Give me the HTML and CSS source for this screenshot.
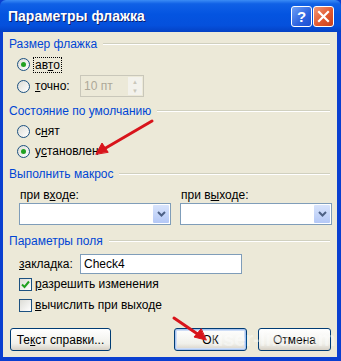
FILE: index.html
```html
<!doctype html>
<html lang="ru">
<head>
  <meta charset="UTF-8">
  <title>Параметры флажка</title>
  <link rel="stylesheet" href="styles.css">
</head>
<body>
  <div class="window">
    <div class="titlebar">
      <span class="title">Параметры флажка</span>
      <div class="title-buttons">
        <span class="tbtn help">?</span>
        <span class="tbtn close">
          <svg width="13" height="13" viewBox="0 0 13 13"><path d="M2 2 L11 11 M11 2 L2 11" stroke="#fff" stroke-width="2.2" stroke-linecap="square"/></svg>
        </span>
      </div>
    </div>

    <div class="body">
      <div class="group-title g1"><span>Размер флажка</span></div>
      <div class="row r-auto">
        <span class="radio checked"></span>
        <span class="focus">ав<u>т</u>о</span>
      </div>
      <div class="row r-exact">
        <span class="radio"></span>
        <span class="lbl"><u>т</u>очно:</span>
        <div class="spin">
          <span>10 пт</span>
          <div class="spin-btns"><span>&#9650;</span><span>&#9660;</span></div>
        </div>
      </div>

      <div class="group-title g2"><span>Состояние по умолчанию</span></div>
      <div class="row r-off">
        <span class="radio"></span>
        <span>с<u>н</u>ят</span>
      </div>
      <div class="row r-on">
        <span class="radio checked"></span>
        <span>у<u>с</u>тановлен</span>
      </div>

      <div class="group-title g3"><span>Выполнить макрос</span></div>
      <div class="macro">
        <div class="macro-col">
          <span class="small-lbl">при в<u>х</u>оде:</span>
          <div class="combo"><span class="combo-btn"><svg width="9" height="6" viewBox="0 0 9 6"><path d="M1 1 L4.5 4.5 L8 1" fill="none" stroke="#4D6185" stroke-width="2"/></svg></span></div>
        </div>
        <div class="macro-col">
          <span class="small-lbl">при в<u>ы</u>ходе:</span>
          <div class="combo"><span class="combo-btn"><svg width="9" height="6" viewBox="0 0 9 6"><path d="M1 1 L4.5 4.5 L8 1" fill="none" stroke="#4D6185" stroke-width="2"/></svg></span></div>
        </div>
      </div>

      <div class="group-title g4"><span>Параметры поля</span></div>
      <div class="row r-bookmark">
        <span class="bm-lbl"><u>з</u>акладка:</span>
        <div class="textbox">Check4</div>
      </div>
      <div class="row r-check1">
        <span class="check checked">
          <svg width="11" height="11" viewBox="0 0 11 11"><path d="M2 5.5 L4.5 8 L9 2.5" fill="none" stroke="#21A121" stroke-width="2"/></svg>
        </span>
        <span><u>р</u>азрешить изменения</span>
      </div>
      <div class="row r-check2">
        <span class="check"></span>
        <span><u>в</u>ычислить при выходе</span>
      </div>

      <div class="buttons">
        <span class="btn help-btn">Те<u>к</u>ст справки...</span>
        <div class="btn-pair">
          <span class="btn default">ОК</span>
          <span class="btn">Отмена</span>
        </div>
      </div>
    </div>

    <span class="watermark">user-life.com</span>

    <svg class="arrows" width="341" height="361" viewBox="0 0 341 361">
      <g stroke="#D8141B" stroke-width="3" stroke-linecap="round" fill="#D8141B">
        <line x1="152" y1="121" x2="104" y2="149"/>
        <polygon points="96,154 102,143 108,152" stroke-width="1"/>
        <line x1="174" y1="318" x2="199" y2="335"/>
        <polygon points="206,340 194,337 201,329" stroke-width="1"/>
      </g>
    </svg>
  </div>
</body>
</html>
```

FILE: styles.css
```css
body {
    margin: 0;
    font-family: 'Liberation Sans', Arial, sans-serif;
    font-size: 12px;
    color: #000;
    background: #fff;
}

.window {
    position: relative;
    width: 341px;
    height: 361px;
    box-sizing: border-box;
    background: #0A3FD0;
    padding: 0 4px 4px 3px;
    display: flex;
    flex-direction: column;
    overflow: hidden;
}

.titlebar {
    height: 32px;
    margin: 0 -4px 0 -3px;
    padding: 0 7px 0 8px;
    display: flex;
    align-items: center;
    justify-content: space-between;
    background: linear-gradient(to bottom, #3B8CF5 0%, #1061E6 12%, #0454E0 45%, #0550DC 80%, #0441C4 100%);
    border-radius: 6px 6px 0 0;
}

.title {
    color: #fff;
    font-weight: bold;
    font-size: 14px;
    text-shadow: 1px 1px 0 #0A1E6E;
}

.title-buttons {
    display: flex;
    gap: 1px;
    margin-top: 1px;
}

.tbtn {
    width: 19px;
    height: 19px;
    border: 1px solid #fff;
    border-radius: 3px;
    display: flex;
    align-items: center;
    justify-content: center;
    color: #fff;
    font-weight: bold;
    font-size: 15px;
}

.help {
    background: linear-gradient(135deg, #6FA0F5, #2D63E0 60%, #1C4FD2);
}

.close {
    background: linear-gradient(135deg, #F09878, #E2582F 55%, #C8401C);
}

.body {
    flex: 1;
    background: #ECE9D8;
    padding: 4px 5px 0 5px;
    display: flex;
    flex-direction: column;
}

.group-title {
    height: 16px;
    display: flex;
    align-items: center;
    gap: 6px;
    color: #0046D5;
    padding-left: 1px;
}

.group-title::after {
    content: "";
    flex: 1;
    height: 1px;
    background: #D0D0BF;
    border-bottom: 1px solid #fff;
    margin-right: 2px;
}

.g2 { margin-top: 6px; }
.g3 { margin-top: 5px; }
.g4 { margin-top: 8px; }

.row {
    display: flex;
    align-items: center;
    height: 20px;
    padding-left: 9px;
}

.r-auto { margin-top: 2px; height: 21px; }
.r-exact { height: 22px; }
.r-off { margin-top: 2px; }

.radio {
    width: 11px;
    height: 11px;
    border: 1px solid #1C5180;
    border-radius: 50%;
    background: linear-gradient(135deg, #DCDCD6, #fff);
    margin-right: 5px;
    display: flex;
    align-items: center;
    justify-content: center;
}

.radio.checked::after {
    content: "";
    width: 5px;
    height: 5px;
    border-radius: 50%;
    background: #21A121;
}

.focus {
    outline: 1px dotted #000;
    padding: 0 1px;
    margin-left: -1px;
}

.lbl {
    width: 45px;
}

.spin {
    border: 1px solid #C9C7BA;
    display: flex;
    align-items: center;
    justify-content: space-between;
    color: #ACA899;
    padding-left: 3px;
    box-sizing: border-box;
    width: 64px;
    height: 22px;
}

.spin-btns {
    width: 14px;
    height: 18px;
    margin-right: 1px;
    display: flex;
    flex-direction: column;
    font-size: 6px;
    color: #C9C7BA;
    background: #F3F2EC;
}

.spin-btns span {
    flex: 1;
    display: flex;
    align-items: center;
    justify-content: center;
}

.macro {
    display: flex;
    gap: 9px;
    margin-top: 6px;
    padding-left: 11px;
}

.macro-col {
    display: flex;
    flex-direction: column;
}

.small-lbl {
    height: 14px;
    line-height: 14px;
    padding-left: 1px;
    margin-bottom: 1px;
}

.combo {
    width: 152px;
    height: 22px;
    box-sizing: border-box;
    border: 1px solid #7F9DB9;
    background: #fff;
    display: flex;
    justify-content: flex-end;
    padding: 1px;
}

.combo-btn {
    width: 16px;
    background: linear-gradient(to bottom, #D8E4FC, #B4C8F6);
    border-radius: 1px;
    display: flex;
    align-items: center;
    justify-content: center;
}

.r-bookmark {
    margin-top: 5px;
    padding-left: 11px;
}

.bm-lbl {
    width: 61px;
}

.textbox {
    width: 162px;
    height: 20px;
    box-sizing: border-box;
    border: 1px solid #7F9DB9;
    background: #fff;
    padding-left: 3px;
    line-height: 18px;
}

.r-check1, .r-check2 {
    padding-left: 11px;
}

.r-check2 { margin-top: 1px; }

.check {
    width: 13px;
    height: 13px;
    box-sizing: border-box;
    border: 1px solid #1C5180;
    background: linear-gradient(135deg, #DCDCD6, #fff);
    margin-right: 3px;
    display: flex;
    align-items: center;
    justify-content: center;
}

.buttons {
    display: flex;
    justify-content: space-between;
    margin-top: 13px;
    padding: 0 1px 0 2px;
}

.btn-pair {
    display: flex;
    gap: 11px;
}

.btn {
    width: 73px;
    height: 23px;
    box-sizing: border-box;
    border: 1px solid #003C74;
    border-radius: 3px;
    background: linear-gradient(to bottom, #fff, #F0F0EA 70%, #D6D0C5);
    display: flex;
    align-items: center;
    justify-content: center;
}

.help-btn {
    width: 101px;
}

.btn.default {
    box-shadow: inset 0 0 0 1px #A8C4F0, inset 0 0 0 2px #CEDDF6;
}

.watermark {
    position: absolute;
    left: 211px;
    top: 328px;
    font-size: 20px;
    font-weight: bold;
    color: rgba(255, 255, 255, 0.4);
    pointer-events: none;
}

.arrows {
    position: absolute;
    left: 0;
    top: 0;
    pointer-events: none;
}
```
